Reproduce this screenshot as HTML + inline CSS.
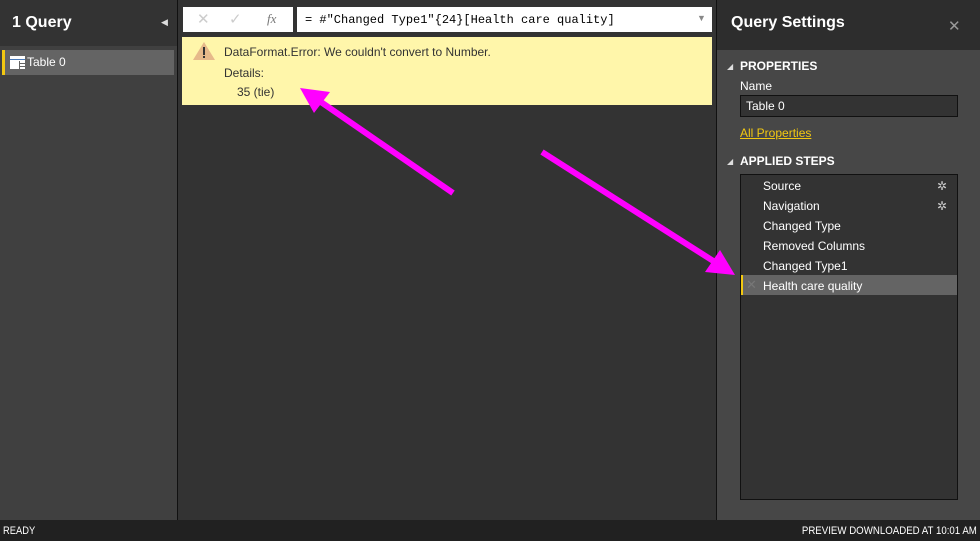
<!DOCTYPE html>
<html><head><style>
*{margin:0;padding:0;box-sizing:border-box}
body{width:980px;height:541px;background:#333;font-family:"Liberation Sans",sans-serif;position:relative;overflow:hidden;color:#fff}
.a{position:absolute}
</style></head><body>
<div class="a" style="left:0;top:0;width:177px;height:520px;background:#404040"></div>
<div class="a" style="left:0;top:0;width:177px;height:46px;background:#333"></div>
<div class="a" style="left:12px;top:14px;font-size:16px;font-weight:bold">1 Query</div>
<div class="a" style="left:161px;top:17px;font-size:9px;color:#ddd">◀</div>
<div class="a" style="left:2px;top:50px;width:172px;height:25px;background:#646464;border-left:3px solid #f2c811"></div>
<svg class="a" style="left:10px;top:56px" width="15" height="13"><rect width="15" height="13" fill="#fff"/><rect y="3" width="15" height="1" fill="#4a7ab8"/><rect x="9" y="5" width="1" height="8" fill="#646464"/><rect x="10" y="7" width="5" height="1" fill="#646464"/><rect x="10" y="10" width="5" height="1" fill="#646464"/></svg>
<div class="a" style="left:27px;top:55px;font-size:12px">Table 0</div>
<div class="a" style="left:177px;top:0;width:1px;height:520px;background:#111"></div>
<div class="a" style="left:716px;top:0;width:1px;height:520px;background:#111"></div>
<div class="a" style="left:183px;top:7px;width:110px;height:25px;background:#fff"></div>
<div class="a" style="left:197px;top:10px;font-size:15px;color:#ccc">✕</div>
<div class="a" style="left:229px;top:10px;font-size:15px;color:#ccc">✓</div>
<div class="a" style="left:267px;top:11px;font-size:13px;color:#777;font-style:italic;font-family:'Liberation Serif',serif">fx</div>
<div class="a" style="left:297px;top:7px;width:415px;height:25px;background:#fff;color:#000;font-family:'Liberation Mono',monospace;font-size:12px;padding:6px 8px">= #"Changed Type1"{24}[Health care quality]</div>
<div class="a" style="left:697px;top:13px;font-size:9px;color:#888">▼</div>
<div class="a" style="left:182px;top:37px;width:530px;height:68px;background:#fff6aa"></div>
<svg class="a" style="left:192px;top:41px" width="24" height="20"><path d="M12 1 L23 19 L1 19 Z" fill="#e6b98a"/><rect x="11" y="6" width="2" height="8" fill="#333"/><rect x="11" y="15" width="2" height="2" fill="#333"/></svg>
<div class="a" style="left:224px;top:45px;font-size:12px;color:#333">DataFormat.Error: We couldn't convert to Number.</div>
<div class="a" style="left:224px;top:66px;font-size:12px;color:#333">Details:</div>
<div class="a" style="left:237px;top:85px;font-size:12px;color:#333">35 (tie)</div>
<div class="a" style="left:717px;top:0;width:263px;height:520px;background:#474747"></div>
<div class="a" style="left:717px;top:0;width:263px;height:50px;background:#2d2d2d"></div>
<div class="a" style="left:731px;top:14px;font-size:16px;font-weight:bold">Query Settings</div>
<div class="a" style="left:948px;top:17px;font-size:15px;color:#999">✕</div>
<div class="a" style="left:727px;top:62px;font-size:8px;color:#ddd">◢</div>
<div class="a" style="left:740px;top:59px;font-size:12px;font-weight:bold">PROPERTIES</div>
<div class="a" style="left:740px;top:79px;font-size:12px">Name</div>
<div class="a" style="left:740px;top:95px;width:218px;height:22px;background:#333;border:1px solid #111;font-size:12px;padding:3px 5px">Table 0</div>
<div class="a" style="left:740px;top:126px;font-size:12px;color:#f2c811;text-decoration:underline">All Properties</div>
<div class="a" style="left:727px;top:157px;font-size:8px;color:#ddd">◢</div>
<div class="a" style="left:740px;top:154px;font-size:12px;font-weight:bold">APPLIED STEPS</div>
<div class="a" style="left:740px;top:174px;width:218px;height:326px;background:#333;border:1px solid #111"></div>
<div class="a" style="left:741px;top:275px;width:216px;height:20px;background:#646464;border-left:2px solid #f2c811"></div>
<div class="a" style="left:746px;top:277px;font-size:13px;color:#777">✕</div>
<div class="a" style="left:763px;top:176px;font-size:12px;line-height:20px">Source<br>Navigation<br>Changed Type<br>Removed Columns<br>Changed Type1<br>Health care quality</div>
<div class="a" style="left:937px;top:176px;font-size:12px;line-height:20px;color:#ccc">✲<br>✲</div>
<div class="a" style="left:0;top:520px;width:980px;height:21px;background:#212121"></div>
<div class="a" style="left:3px;top:525px;font-size:11px;transform:scaleX(.85);transform-origin:left">READY</div>
<div class="a" style="right:3px;top:525px;font-size:11px;transform:scaleX(.88);transform-origin:right">PREVIEW DOWNLOADED AT 10:01 AM</div>
<svg class="a" style="left:0;top:0" width="980" height="541">
<line x1="453" y1="193" x2="318" y2="100" stroke="#ff00ff" stroke-width="6"/>
<path d="M300 88 L330 92 L314 113 Z" fill="#ff00ff"/>
<line x1="542" y1="152" x2="718" y2="264" stroke="#ff00ff" stroke-width="6"/>
<path d="M735 275 L705 272 L720 250 Z" fill="#ff00ff"/>
</svg>
</body></html>
